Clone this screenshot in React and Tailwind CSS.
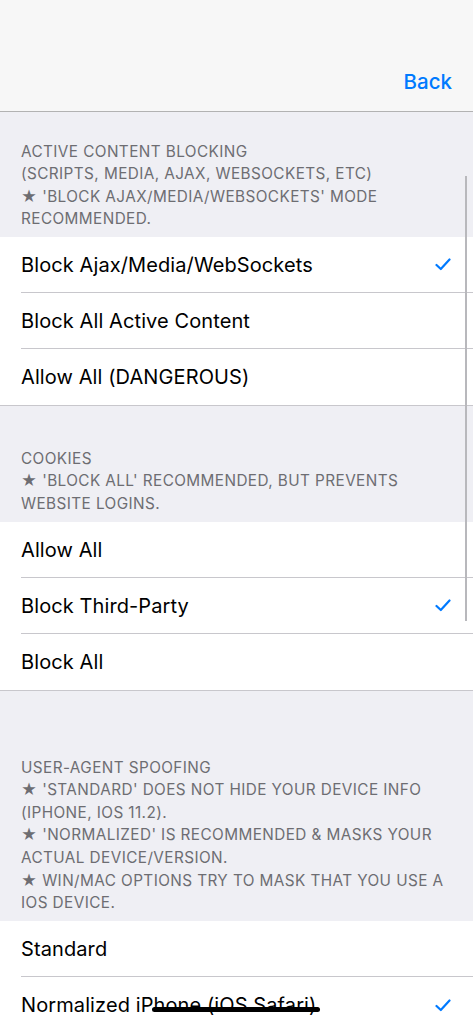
import React from 'react';

const Check = () => (
  <svg width="16" height="13" viewBox="0 0 16 13" className="shrink-0">
    <path d="M1.5 7 L5.8 11 L14.5 1.5" fill="none" stroke="#007aff" strokeWidth="2.2" strokeLinecap="round" strokeLinejoin="round" />
  </svg>
);

const Header = ({ lines, className = '' }) => (
  <div className={`bg-[#efeff4] px-[21px] pb-[6.5px] text-[15.3px] leading-[22.6px] tracking-[0.42px] text-[#6d6d72] ${className}`}>
    {lines.map((l, i) => (
      <div key={i} className="whitespace-nowrap">{l}</div>
    ))}
  </div>
);

const Group = ({ rows }) => (
  <div className="bg-white border-b border-[#c8c7cc]">
    {rows.map((r, i) => (
      <div key={i} className="pl-[21px]">
        <div className={`flex h-[56px] items-center pr-[22px] ${i < rows.length - 1 ? 'border-b border-[#c8c7cc]' : ''}`}>
          <span className="flex-1 text-[20px] tracking-[0.1px] text-black">{r.label}</span>
          {r.checked && <Check />}
        </div>
      </div>
    ))}
  </div>
);

export default function App() {
  return (
    <div className="relative h-[1024px] w-[473px] overflow-hidden bg-[#efeff4] font-['Inter','Roboto',sans-serif]">
      <div className="flex h-[112px] items-end justify-end border-b border-[#b2b2b2] bg-[#f7f7f7] px-[21px] pb-[13px]">
        <span className="text-[20.5px] font-medium text-[#007aff]">Back</span>
      </div>

      <Header
        className="pt-[28.5px]"
        lines={[
          'ACTIVE CONTENT BLOCKING',
          '(SCRIPTS, MEDIA, AJAX, WEBSOCKETS, ETC)',
          "★ 'BLOCK AJAX/MEDIA/WEBSOCKETS' MODE",
          'RECOMMENDED.',
        ]}
      />
      <Group
        rows={[
          { label: 'Block Ajax/Media/WebSockets', checked: true },
          { label: 'Block All Active Content' },
          { label: 'Allow All (DANGEROUS)' },
        ]}
      />

      <Header
        className="pt-[41.5px]"
        lines={['COOKIES', "★ 'BLOCK ALL' RECOMMENDED, BUT PREVENTS", 'WEBSITE LOGINS.']}
      />
      <Group
        rows={[
          { label: 'Allow All' },
          { label: 'Block Third-Party', checked: true },
          { label: 'Block All' },
        ]}
      />

      <Header
        className="pt-[65.5px]"
        lines={[
          'USER-AGENT SPOOFING',
          "★ 'STANDARD' DOES NOT HIDE YOUR DEVICE INFO",
          '(IPHONE, IOS 11.2).',
          "★ 'NORMALIZED' IS RECOMMENDED & MASKS YOUR",
          'ACTUAL DEVICE/VERSION.',
          '★ WIN/MAC OPTIONS TRY TO MASK THAT YOU USE A',
          'IOS DEVICE.',
        ]}
      />
      <Group
        rows={[
          { label: 'Standard' },
          { label: 'Normalized iPhone (iOS Safari)', checked: true },
        ]}
      />

      {/* scroll indicator */}
      <div className="absolute left-[465px] top-[176px] h-[445px] w-[1.5px] bg-[#b8b8bc]" />
      {/* home indicator */}
      <div className="absolute left-[152px] top-[1007px] h-[5px] w-[168px] rounded-full bg-black" />
    </div>
  );
}
